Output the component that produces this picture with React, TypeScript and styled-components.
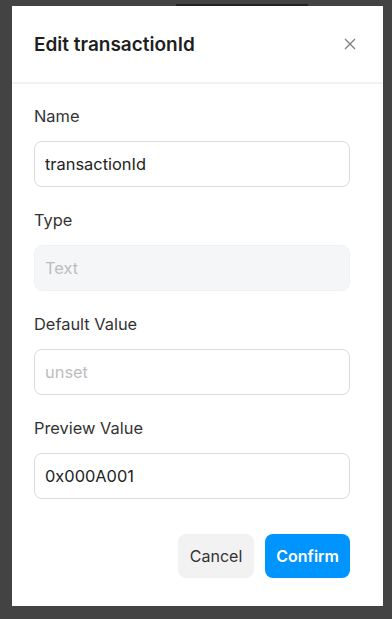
import styled, { createGlobalStyle } from "styled-components";

const GlobalStyle = createGlobalStyle`
  html, body {
    margin: 0;
    padding: 0;
    background: #434343;
    font-family: Inter, "Noto Sans", sans-serif;
  }
  * { box-sizing: border-box; }
`;

const Backdrop = styled.div`
  min-height: 619px;
  padding: 6px 9px 13px 12px;
  position: relative;
`;

const BehindBar = styled.div`
  position: absolute;
  top: 4px;
  left: 176px;
  width: 132px;
  height: 2px;
  background: #222;
`;

const Modal = styled.div`
  width: 371px;
  height: 600px;
  background: #fff;
  display: flex;
  flex-direction: column;
`;

const Header = styled.div`
  height: 78px;
  display: flex;
  align-items: center;
  justify-content: space-between;
  padding: 0 23px 0 22px;
  border-bottom: 2px solid #f1f1f1;
`;

const Title = styled.h2`
  margin: 0;
  font-size: 19px;
  font-weight: 600;
  color: #1f1f1f;
`;

const CloseButton = styled.button`
  border: none;
  background: none;
  padding: 0;
  width: 20px;
  height: 20px;
  display: flex;
  align-items: center;
  justify-content: center;
  cursor: pointer;
`;

const Body = styled.div`
  padding: 23px 33px 0 22px;
  display: flex;
  flex-direction: column;
  gap: 24px;
`;

const Field = styled.div`
  display: flex;
  flex-direction: column;
  gap: 15px;
`;

const Label = styled.label`
  font-size: 16.4px;
  line-height: 19px;
  color: #333;
`;

const Input = styled.input<{ $disabled?: boolean }>`
  height: 46px;
  width: 100%;
  border: 1px solid ${(p) => (p.$disabled ? "#f0f1f2" : "#dcdcdc")};
  border-radius: 8px;
  background: ${(p) => (p.$disabled ? "#f5f6f7" : "#fff")};
  padding: 0 10px;
  font-family: inherit;
  font-size: 16.4px;
  color: #222;
  outline: none;

  &::placeholder {
    color: #bdbdbd;
  }
`;

const Footer = styled.div`
  display: flex;
  justify-content: flex-end;
  gap: 11px;
  padding: 35px 33px 0 22px;
`;

const Button = styled.button<{ $primary?: boolean }>`
  height: 44px;
  padding: 0 ${(p) => (p.$primary ? "11px" : "12px")};
  border: none;
  border-radius: 8px;
  font-family: inherit;
  font-size: 16px;
  font-weight: ${(p) => (p.$primary ? 600 : 400)};
  background: ${(p) => (p.$primary ? "#0094ff" : "#f2f2f2")};
  color: ${(p) => (p.$primary ? "#fff" : "#333")};
  cursor: pointer;
`;

export default function App() {
  return (
    <>
      <GlobalStyle />
      <Backdrop>
        <BehindBar />
        <Modal>
          <Header>
            <Title>Edit transactionId</Title>
            <CloseButton aria-label="Close">
              <svg width="12" height="12" viewBox="0 0 12 12">
                <path d="M1 1L11 11M11 1L1 11" stroke="#808080" strokeWidth="1.4" />
              </svg>
            </CloseButton>
          </Header>
          <Body>
            <Field>
              <Label>Name</Label>
              <Input defaultValue="transactionId" />
            </Field>
            <Field>
              <Label>Type</Label>
              <Input $disabled disabled placeholder="Text" />
            </Field>
            <Field>
              <Label>Default Value</Label>
              <Input placeholder="unset" />
            </Field>
            <Field>
              <Label>Preview Value</Label>
              <Input defaultValue="0x000A001" />
            </Field>
          </Body>
          <Footer>
            <Button>Cancel</Button>
            <Button $primary>Confirm</Button>
          </Footer>
        </Modal>
      </Backdrop>
    </>
  );
}
